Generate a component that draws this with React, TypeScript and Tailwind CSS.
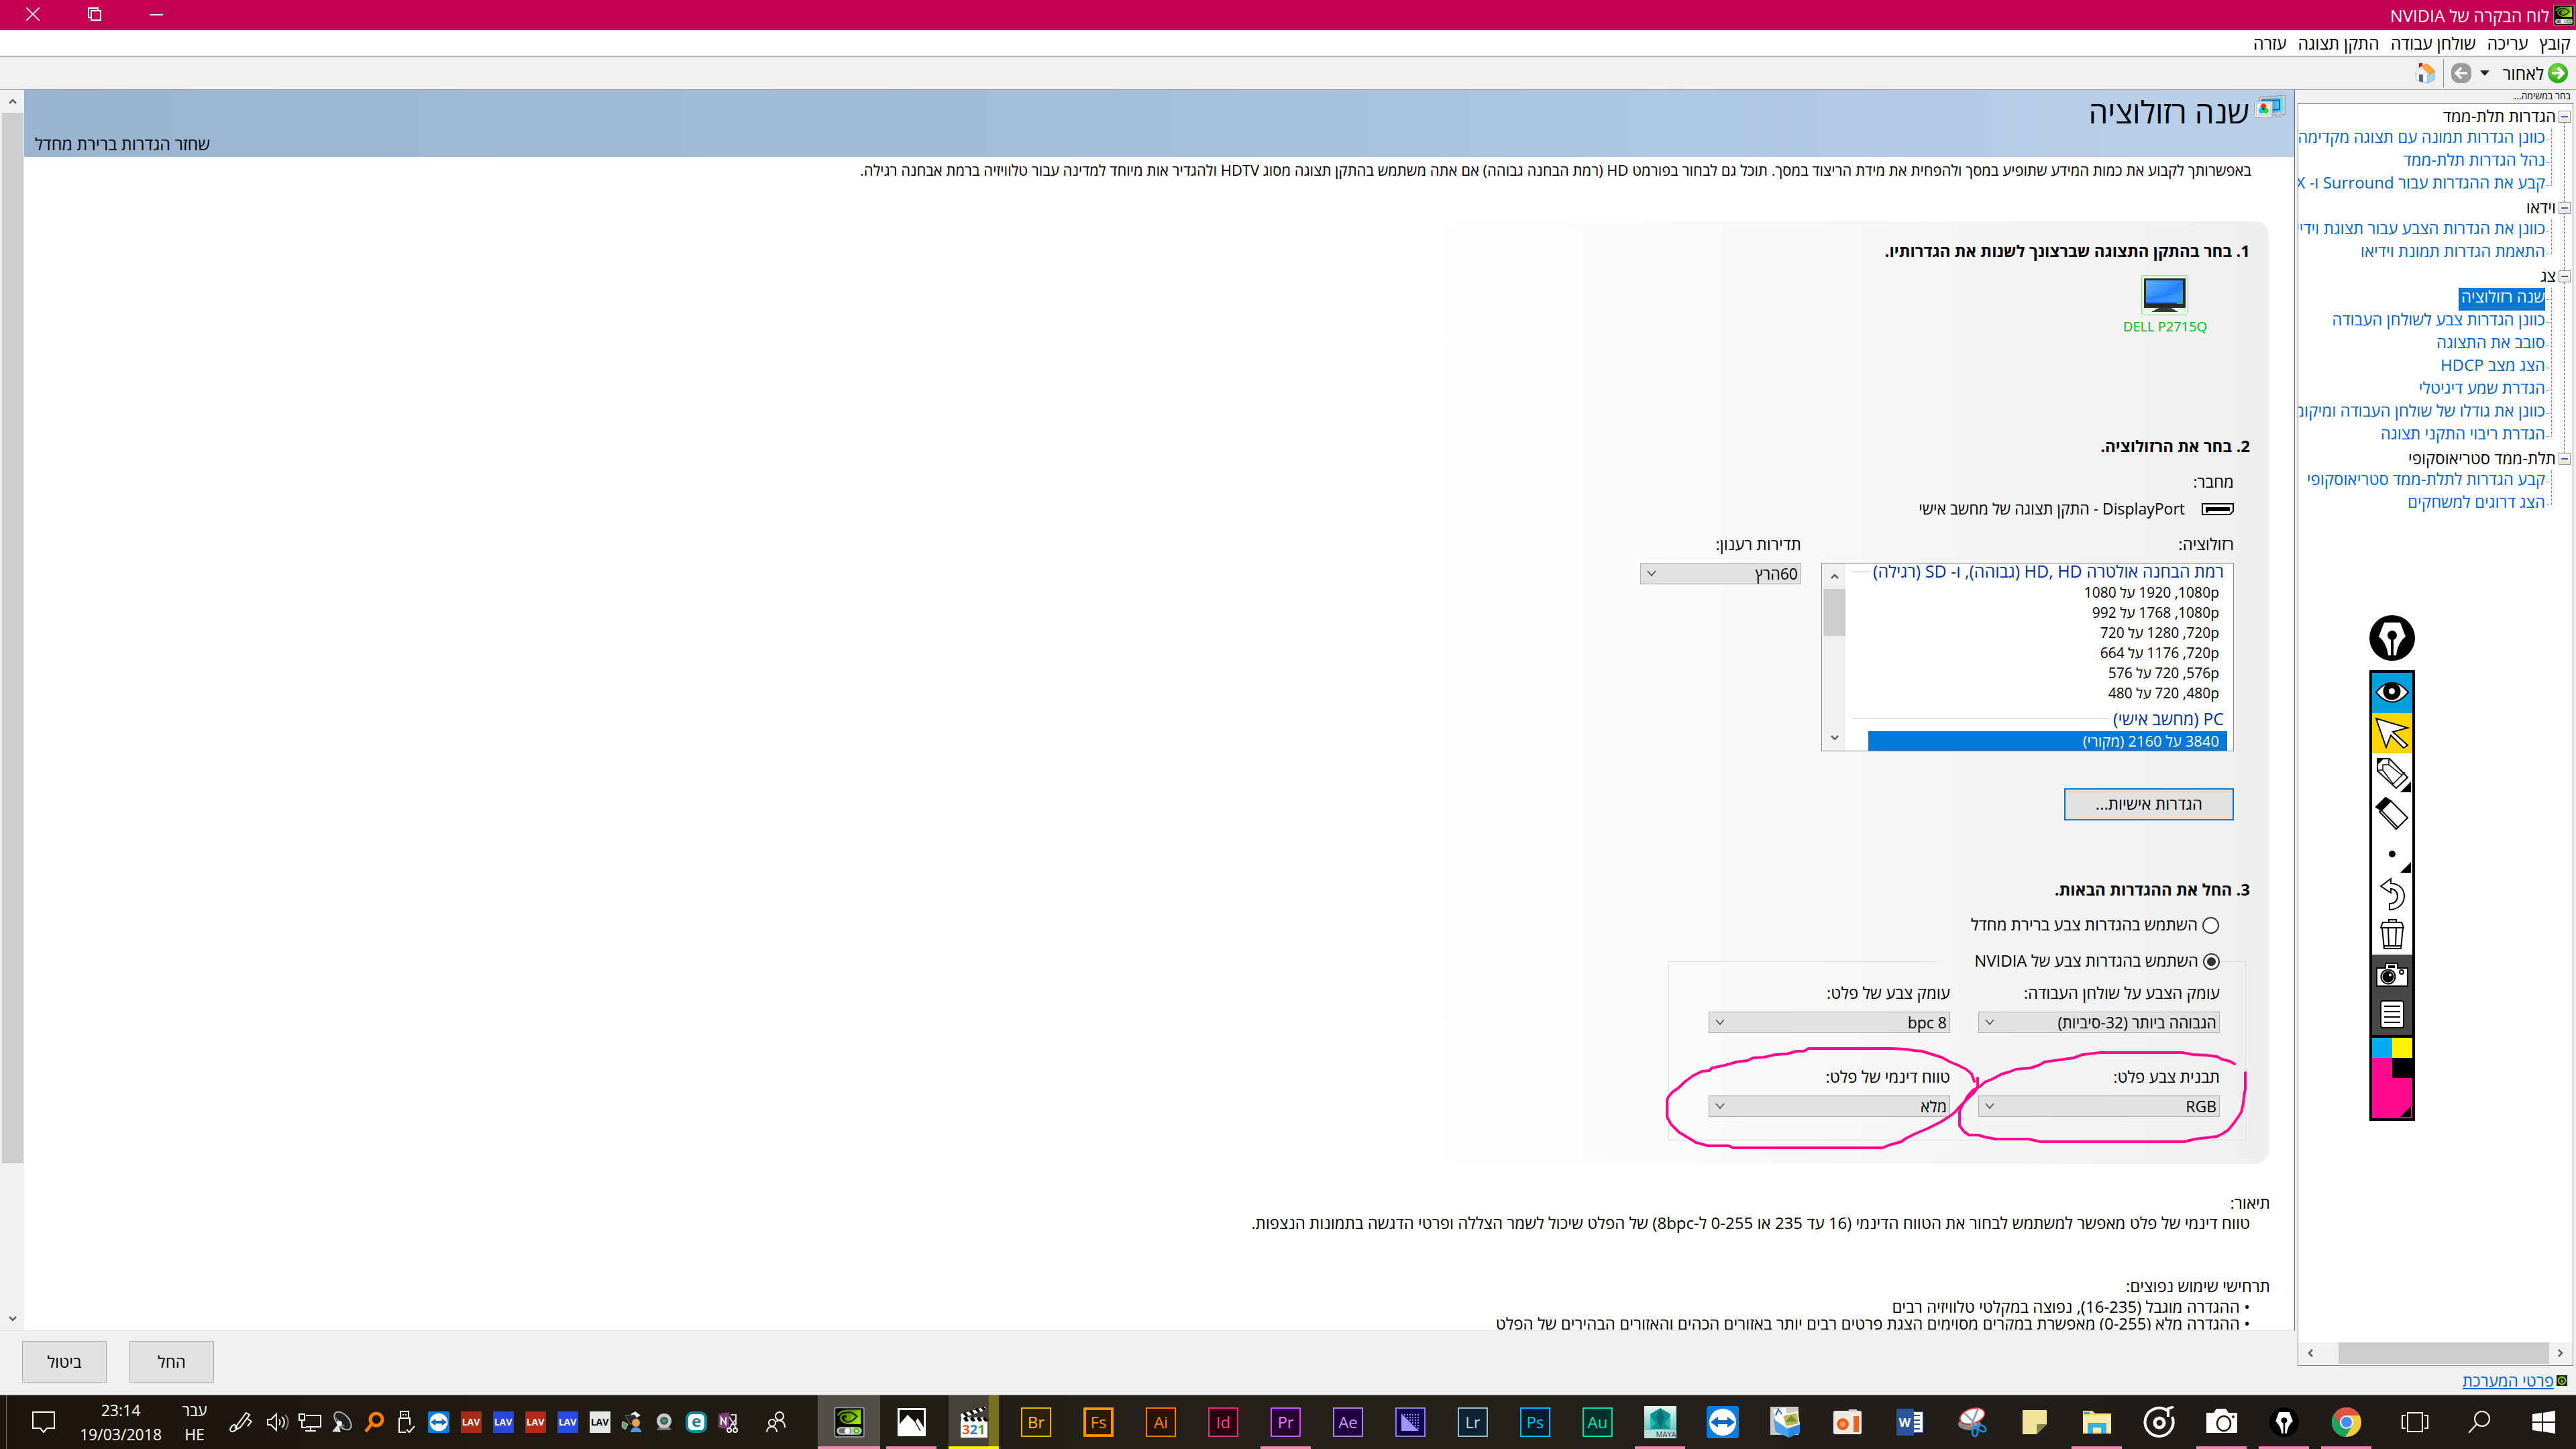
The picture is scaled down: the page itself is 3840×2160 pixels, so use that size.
import type { ReactNode } from 'react';

/* ---------- tree data ---------- */

const TREE = [
  {
    title: 'הגדרות תלת-ממד',
    items: ['כוונן הגדרות תמונה עם תצוגה מקדימה', 'נהל הגדרות תלת-ממד', 'קבע את ההגדרות עבור Surround ו- PhysX'],
  },
  {
    title: 'וידאו',
    items: ['כוונן את הגדרות הצבע עבור תצוגת וידיאו', 'התאמת הגדרות תמונת וידיאו'],
  },
  {
    title: 'צג',
    items: [
      'שנה רזולוציה',
      'כוונן הגדרות צבע לשולחן העבודה',
      'סובב את התצוגה',
      'הצג מצב HDCP',
      'הגדרת שמע דיגיטלי',
      'כוונן את גודלו של שולחן העבודה ומיקומו',
      'הגדרת ריבוי התקני תצוגה',
    ],
  },
  {
    title: 'תלת-ממד סטריאוסקופי',
    items: ['קבע הגדרות לתלת-ממד סטריאוסקופי', 'הצג דרוגים למשחקים'],
  },
];

const SELECTED = 'שנה רזולוציה';

const RESOLUTIONS = [
  '1080p\u200f, 1920 על 1080',
  '1080p\u200f, 1768 על 992',
  '720p\u200f, 1280 על 720',
  '720p\u200f, 1176 על 664',
  '576p\u200f, 720 על 576',
  '480p\u200f, 720 על 480',
];

/* ---------- shared pieces ---------- */

function Chevron({ d }: { d: string }) {
  return (
    <svg width="12" height="12" viewBox="0 0 12 12" fill="none" stroke="#606060" strokeWidth="2.6">
      <path d={d} />
    </svg>
  );
}

const UP = 'M1 9l5-5 5 5';
const DOWN = 'M1 3l5 5 5-5';
const LEFT = 'M9 1L4 6l5 5';
const RIGHT = 'M3 1l5 5-5 5';

function NvidiaIcon({ className }: { className: string }) {
  return (
    <svg className={className} viewBox="0 0 32 32">
      <defs>
        <linearGradient id="nvg" x1="0" y1="0" x2="1" y2="1">
          <stop offset="0" stopColor="#3c6a00" />
          <stop offset="0.5" stopColor="#86c800" />
          <stop offset="1" stopColor="#b6f000" />
        </linearGradient>
      </defs>
      <rect x="0.75" y="0.75" width="30.5" height="30.5" rx="2" fill="#0a0a0a" stroke="#8a8a8a" strokeWidth="1.5" />
      <path d="M13 3h15v15H13z" fill="url(#nvg)" />
      <path d="M4 9c4-6 13-7 19 1-4 6-11 9-15 4-2-3 0-7 5-6 3 0 5 3 3 5s-5 0-4-2" fill="none" stroke="#5f9a00" strokeWidth="1.8" />
      <path d="M13 6c4-1 8 1 11 4-3 4-7 6-11 6" fill="none" stroke="#1d2e00" strokeWidth="1.6" />
      <rect x="3" y="21" width="26" height="8" rx="4" fill="#c9c9c9" />
      <rect x="5" y="22.5" width="13" height="5" rx="2.5" fill="#6c6c6c" />
      <circle cx="14" cy="25" r="3" fill="#f4f4f4" />
      <circle cx="23.5" cy="25" r="3.2" fill="#3fc11c" />
      <circle cx="23.5" cy="25" r="1.4" fill="#d7ffd0" />
    </svg>
  );
}

function Combo({ id, value, width }: { id: string; value: string; width: string }) {
  return (
    <div className={`relative h-8 ${width}`}>
      <select
        id={id}
        defaultValue={value}
        className="block h-8 w-full appearance-none border border-[#adadad] bg-[#e1e1e1] pr-1 pl-8 text-[23px] leading-[30px] text-black"
      >
        <option>{value}</option>
      </select>
      <svg className="pointer-events-none absolute top-2.5 left-2.5 h-3 w-3.5" viewBox="0 0 14 12" fill="none" stroke="#444" strokeWidth="1.5">
        <path d="M1 2l6 7 6-7" />
      </svg>
    </div>
  );
}

/* ---------- window chrome ---------- */

function TitleBar() {
  const btn = 'flex h-[45px] w-[92px] items-center justify-center';
  return (
    <header className="flex h-[45px] shrink-0 items-center bg-[#c40052] pr-[2px] pl-[3px] text-white">
      <NvidiaIcon className="h-8 w-8" />
      <h1 className="mr-1.5 text-[25px] leading-[34px]">לוח הבקרה של NVIDIA</h1>
      <div className="mr-auto flex pb-1">
        <button className={btn} aria-label="מזער">
          <svg width="20" height="20" viewBox="0 0 20 20" stroke="white" strokeWidth="2"><path d="M0 11h20" /></svg>
        </button>
        <button className={btn} aria-label="שחזר">
          <svg width="20" height="20" viewBox="0 0 20 20" fill="none" stroke="white" strokeWidth="2"><path d="M5 5h14v14H5zM5 15H1V1h14v4" /></svg>
        </button>
        <button className={btn} aria-label="סגור">
          <svg width="20" height="20" viewBox="0 0 20 20" stroke="white" strokeWidth="1.6"><path d="M0 0l20 20M20 0L0 20" /></svg>
        </button>
      </div>
    </header>
  );
}

function MenuBar() {
  return (
    <nav className="flex h-[39px] shrink-0 items-center gap-[17px] border-b-2 border-[#f0f0f0] bg-white pr-2 text-[25px] leading-[36px] text-black">
      <button>קובץ</button>
      <button>עריכה</button>
      <button>שולחן עבודה</button>
      <button>התקן תצוגה</button>
      <button>עזרה</button>
    </nav>
  );
}

function ToolBar() {
  return (
    <div className="flex h-[50px] shrink-0 items-center border-t border-b border-[#a0a0a0] bg-[#f0f0f0] pr-3">
      <button className="flex items-center gap-1.5 text-[25px] leading-[34px]">
        <svg width="30" height="30" viewBox="0 0 30 30">
          <defs>
            <radialGradient id="back" cx="0.4" cy="0.3" r="0.8">
              <stop offset="0" stopColor="#7fe04a" />
              <stop offset="1" stopColor="#159a08" />
            </radialGradient>
          </defs>
          <circle cx="15" cy="15" r="15" fill="url(#back)" />
          <path d="M6 15h16M15 7l8 8-8 8" fill="none" stroke="white" strokeWidth="4" />
        </svg>
        לאחור
      </button>
      <svg className="mr-5" width="14" height="8" viewBox="0 0 14 8"><path d="M0 0h14L7 8z" fill="#222" /></svg>
      <button className="mr-[13px]" aria-label="קדימה">
        <svg width="30" height="30" viewBox="0 0 30 30">
          <rect width="30" height="30" rx="12" fill="#9b9b9b" />
          <path d="M24 15H8M15 7l-8 8 8 8" fill="none" stroke="white" strokeWidth="3.5" />
        </svg>
      </button>
      <div className="mr-[11px] h-[42px] w-px bg-[#8a8a8a]" />
      <button className="mr-[11px]" aria-label="דף הבית">
        <svg width="32" height="32" viewBox="0 0 32 32">
          <rect x="7" y="1" width="5" height="8" fill="#b3201a" />
          <path d="M2 15L11 7l9 10v14L3 27z" fill="#f7faff" stroke="#8eb4dc" />
          <path d="M20 17l10-3v12l-10 5z" fill="#a9d3f5" stroke="#7fa9d8" />
          <path d="M10 6l9-4 12 11-9 6z" fill="#fba93e" stroke="#e08a2a" />
          <path d="M10 6L1 15l2 2 8-8 9 10 2-1z" fill="white" stroke="#9bb8d8" strokeWidth="0.7" />
          <path d="M7 18h6v12l-6-2z" fill="#56629a" />
        </svg>
      </button>
    </div>
  );
}

/* ---------- side tree ---------- */

function Sidebar() {
  return (
    <aside className="flex w-[419px] shrink-0 flex-col bg-[#f0f0f0] pr-1 pl-1">
      <p className="h-5 pr-1 text-[14px] leading-[18px] text-black">בחר במשימה...</p>
      <div className="flex min-h-0 flex-1 flex-col border border-[#828790] bg-white">
        <ul className="min-h-0 flex-1 overflow-hidden pt-0.5">
          {TREE.map((group, gi) => (
            <li key={group.title} className="relative">
              {gi < TREE.length - 1 && (
                <span className="absolute top-[26px] right-[12px] -bottom-2 border-r border-dotted border-[#555]" />
              )}
              <div className="flex h-[34px] items-center gap-1 pr-[3px]">
                <button
                  aria-label={group.title}
                  className="flex h-[18px] w-[18px] items-center justify-center border border-[#919191] bg-linear-to-b from-white to-[#e4e4e4]"
                >
                  <span className="h-0.5 w-2.5 bg-[#3f5ea8]" />
                </button>
                <span className="pb-0.5 text-[24px] leading-[30px] whitespace-nowrap">{group.title}</span>
              </div>
              <ul className="relative mr-[31px]">
                <span className="absolute top-0 right-0 bottom-4 border-r border-dotted border-[#777]" />
                {group.items.map((item) => (
                  <li key={item} className="flex h-[34px]">
                    <span className="mt-[17px] ml-0.5 w-2 shrink-0 border-t border-dotted border-[#777]" />
                    <a
                      href="#"
                      className={
                        item === SELECTED
                          ? 'h-[34px] bg-[#0078d7] pl-1 text-[24px] leading-[25px] whitespace-nowrap text-white'
                          : 'h-[34px] text-[24px] leading-[25px] whitespace-nowrap text-[#0066cc]'
                      }
                    >
                      {item}
                    </a>
                  </li>
                ))}
              </ul>
            </li>
          ))}
        </ul>
        <div className="flex h-[34px] shrink-0 border-b-2 border-white bg-[#f0f0f0] px-px">
          <span className="flex w-[34px] items-center justify-center"><Chevron d={RIGHT} /></span>
          <span className="w-[314px] bg-[#cdcdcd]" />
          <span className="mr-auto flex w-[34px] items-center justify-center"><Chevron d={LEFT} /></span>
        </div>
      </div>
      <div className="flex h-[43px] shrink-0 items-center gap-1 pr-[9px]">
        <svg width="16" height="16" viewBox="0 0 16 16">
          <rect width="16" height="16" fill="#16240a" />
          <circle cx="8" cy="8" r="5.4" fill="none" stroke="#a5e000" strokeWidth="1.8" />
          <path d="M8 7v4M8 4.4v1.4" stroke="#a5e000" strokeWidth="2" />
        </svg>
        <a href="#" className="text-[24px] leading-[30px] text-[#0066cc] underline">פרטי המערכת</a>
      </div>
    </aside>
  );
}

/* ---------- main page ---------- */

function PageHeader() {
  return (
    <div className="flex h-[100px] shrink-0 bg-linear-to-l from-[#b9d0ea] via-[#a5bfdb] to-[#99b3d1] pr-3 pl-4">
      <svg className="mt-2 h-[38px] w-12 shrink-0" viewBox="0 0 48 38">
        <defs>
          <linearGradient id="scr" x1="0" y1="0" x2="1" y2="0">
            <stop offset="0" stopColor="#1d66c8" />
            <stop offset="1" stopColor="#5ce6f5" />
          </linearGradient>
        </defs>
        <path d="M8 3l39-3v29l-39 1z" fill="#c9ccd2" stroke="#8c9098" />
        <path d="M11 6l32-3v22l-32 2z" fill="url(#scr)" />
        <path d="M17 9l21-2v14l-21 2z" fill="none" stroke="#1a5cb5" strokeWidth="2" />
        <path d="M33 29h6l3 5H29z" fill="#b9bcc2" />
        <path d="M1 9h27l-1 24H0z" fill="#e8eaee" stroke="#9a9ea6" />
        <path d="M4 12h21v17H3z" fill="#f6f8fa" stroke="#8cbbe8" />
        <circle cx="14" cy="17" r="4.4" fill="#ff2a1a" />
        <circle cx="11" cy="23" r="4.4" fill="#12c8f0" />
        <circle cx="17.5" cy="23" r="4.4" fill="#1fe01f" />
        <circle cx="14" cy="20.5" r="1.8" fill="#3b1a80" />
        <path d="M10 33h9l4 4H7z" fill="#c5c8ce" />
      </svg>
      <h2 className="mr-[7px] text-[46px] leading-[64px]">שנה רזולוציה</h2>
      <button className="mr-auto self-end text-[25px] leading-[40px]">שחזר הגדרות ברירת מחדל</button>
    </div>
  );
}

function StepTitle({ children }: { children: ReactNode }) {
  return <h3 className="h-[34px] text-[24px] leading-[32px] font-bold">{children}</h3>;
}

function ScrollBar() {
  return (
    <div className="flex w-[36px] shrink-0 flex-col border-l-[3px] border-[#f0f0f0] bg-[#f0f0f0] pr-px">
      <span className="flex h-[34px] items-center justify-center"><Chevron d={UP} /></span>
      <span className="basis-[1566px] bg-[#cdcdcd]" />
      <span className="mt-auto flex h-[34px] items-center justify-center"><Chevron d={DOWN} /></span>
    </div>
  );
}

function ListHeader({ children }: { children: ReactNode }) {
  return (
    <div className="flex items-center gap-1 pr-3.5">
      <span className="text-[25px] leading-[30px] whitespace-nowrap text-[#003399]">{children}</span>
      <span className="h-px flex-1 bg-[#c9d6ea]" />
    </div>
  );
}

function ResolutionList() {
  return (
    <div className="flex h-[281px] w-[615px] overflow-hidden border border-[#828790] bg-white pl-0.5">
      <div className="flex-1 pl-2.5">
        <div className="-mt-1">
          <ListHeader>רמת הבחנה אולטרה HD, HD (גבוהה), ו- SD (רגילה)</ListHeader>
        </div>
        <ul className="mt-0.5" aria-labelledby="res-label">
          {RESOLUTIONS.map((r) => (
            <li key={r} className="h-[30px] pr-[21px] text-[21px] leading-[30px]">{r}</li>
          ))}
        </ul>
        <div className="mt-2">
          <ListHeader>PC (מחשב אישי)</ListHeader>
        </div>
        <p className="mt-1 mr-[9px] ml-6 h-[29px] bg-[#0078d7] pr-3 text-[22px] leading-[28px] text-white">3840 על 2160 (מקורי)</p>
      </div>
      <div className="flex w-[33px] flex-col bg-[#f0f0f0]">
        <span className="flex h-[38px] items-center justify-center"><Chevron d={UP} /></span>
        <span className="h-[70px] bg-[#cdcdcd]" />
        <span className="mt-auto flex h-[38px] items-center justify-center"><Chevron d={DOWN} /></span>
      </div>
    </div>
  );
}

function Field({ id, label, value }: { id: string; label: string; value: string }) {
  return (
    <div className="w-[360px]">
      <label htmlFor={id} className="block h-[34px] text-[24px] leading-[32px] whitespace-nowrap">{label}</label>
      <div className="mt-2.5"><Combo id={id} value={value} width="w-full" /></div>
    </div>
  );
}

function Radio({ id, label, checked }: { id: string; label: string; checked?: boolean }) {
  return (
    <div className="flex h-[34px] items-center gap-[7px]">
      <input
        id={id}
        type="radio"
        name="color"
        defaultChecked={checked}
        className="h-[25px] w-[25px] shrink-0 appearance-none rounded-full border-2 border-[#333] bg-white checked:bg-[radial-gradient(circle,#333_0_6px,white_7px)]"
      />
      <label htmlFor={id} className="pb-0.5 text-[24px] leading-[32px] whitespace-nowrap">{label}</label>
    </div>
  );
}

function InkCircles() {
  return (
    <svg
      className="pointer-events-none absolute top-[103px] -right-3 h-[170px] w-[880px]"
      viewBox="2480 1553 880 170"
      fill="none"
      stroke="#ff0a8c"
      strokeWidth="4"
      strokeLinejoin="round"
      strokeLinecap="round"
    >
      <path d="M2944 1612L2940 1601 2932 1594 2920 1588 2908 1583 2895 1576 2882 1572 2866 1567 2855 1566 2841 1564 2820 1563H2697L2690 1567 2679 1567 2665 1571 2648 1572 2630 1576 2614 1577 2606 1581 2590 1583 2572 1588 2553 1592 2549 1596 2538 1597 2524 1604 2512 1613 2504 1621 2494 1628 2488 1635 2486 1640V1665L2492 1676 2504 1688 2516 1695 2529 1703 2547 1708H2578L2584 1711H2807L2817 1707 2835 1702 2842 1697 2856 1690 2875 1682 2893 1673 2906 1665 2915 1658 2922 1650 2930 1642 2937 1635 2945 1627 2949 1620V1607" />
      <path d="M3332 1586L3325 1582 3313 1579 3306 1575 3290 1573 3270 1572 3254 1569H3132L3106 1572 3092 1577 3070 1580 3049 1583 3040 1588 3028 1592 3006 1594 2996 1598 2985 1601 2972 1608 2960 1613 2952 1620 2942 1625 2934 1634 2932 1638 2926 1648 2922 1657V1678L2929 1687 2936 1692H2950L2960 1695 2976 1698H3025L3043 1702H3257L3273 1698 3290 1696 3306 1694 3314 1690 3322 1685 3328 1678 3334 1670 3342 1658 3345 1645 3346 1634 3348 1623V1599" />
    </svg>
  );
}

function Panel() {
  return (
    <section className="mt-14 mr-[38px] rounded-[20px] bg-linear-to-l from-[#efefef] to-white to-38% pt-7 pr-7 pb-[35px]">
      <StepTitle>1. בחר בהתקן התצוגה שברצונך לשנות את הגדרותיו.</StepTitle>
      <div className="mt-[18px] flex h-[94px] pr-16">
        <button className="flex flex-col items-center">
          <svg className="h-[60px] w-[70px]" viewBox="0 0 70 60">
            <defs>
              <linearGradient id="mon" x1="0" y1="0" x2="1" y2="1">
                <stop offset="0" stopColor="#5db4ff" />
                <stop offset="0.5" stopColor="#2f8cff" />
                <stop offset="1" stopColor="#3aa5ff" />
              </linearGradient>
            </defs>
            <rect x="0.5" y="0.5" width="69" height="59" rx="2" fill="#e6fbe6" stroke="#86d586" />
            <path d="M4 5h62v44H4z" fill="#2b2b2b" />
            <path d="M7 8h55v34H7z" fill="url(#mon)" />
            <path d="M7 34c22-3 40-10 50-26h5v14C46 32 26 36 7 36z" fill="#1f72f0" opacity="0.45" />
            <path d="M7 41h46v2H7z" fill="#1231c8" />
            <path d="M53 41h9v2h-9z" fill="#37b52a" />
            <path d="M26 49h18l11 6H15z" fill="#3a3a3a" />
          </svg>
          <span className="text-[20px] leading-[34px] text-[#0fb40f]">DELL P2715Q</span>
        </button>
      </div>

      <div className="mt-[145px]"><StepTitle>2. בחר את הרזולוציה.</StepTitle></div>
      <div className="mt-[19px] pr-6">
        <p className="h-[34px] text-[24px] leading-[32px]">מחבר:</p>
        <div className="mt-1.5 flex h-[34px] items-center gap-[25px]">
          <svg width="48" height="18" viewBox="0 0 48 18">
            <path d="M1 1h46v11l-5 5H1z" fill="white" stroke="black" strokeWidth="2" />
            <path d="M6 6h36v6H10v2H6z" fill="black" />
          </svg>
          <span className="pb-0.5 text-[23px] leading-[32px]">DisplayPort - התקן תצוגה של מחשב אישי</span>
        </div>
        <div className="mt-[19px] flex gap-[30px]">
          <div>
            <p id="res-label" className="h-[34px] text-[24px] leading-[32px]">רזולוציה:</p>
            <div className="mt-2.5"><ResolutionList /></div>
          </div>
          <div>
            <label htmlFor="refresh" className="block h-[34px] text-[24px] leading-[32px]">תדירות רענון:</label>
            <div className="mt-2.5"><Combo id="refresh" value="60הרץ" width="w-[240px]" /></div>
          </div>
        </div>
        <button className="mt-[55px] block h-12 w-[253px] border-2 border-[#0078d7] bg-[#e1e1e1] pb-0.5 text-[24px] leading-[32px]">
          הגדרות אישיות...
        </button>
      </div>

      <div className="mt-[87px]"><StepTitle>3. החל את ההגדרות הבאות.</StepTitle></div>
      <div className="mt-[18px] pr-[46px]">
        <Radio id="color-default" label="השתמש בהגדרות צבע ברירת מחדל" />
      </div>
      <fieldset className="relative mt-5 mr-1.5 w-[861px] border border-[#dcdcdc] pr-[38px] pb-[34px]">
        <legend className="w-[420px]">
          <Radio id="color-nvidia" label="השתמש בהגדרות צבע של NVIDIA" checked />
        </legend>
        <div className="mt-3.5 flex gap-[42px]">
          <Field id="desktop-depth" label="עומק הצבע על שולחן העבודה:" value="הגבוהה ביותר (32-סיביות)" />
          <Field id="output-depth" label="עומק צבע של פלט:" value="8 bpc" />
        </div>
        <div className="mt-[49px] flex gap-[42px]">
          <Field id="output-format" label="תבנית צבע פלט:" value="RGB" />
          <Field id="output-range" label="טווח דינמי של פלט:" value="מלא" />
        </div>
        <InkCircles />
      </fieldset>
    </section>
  );
}

function Main() {
  return (
    <main className="flex min-w-0 flex-1 flex-col bg-[#f0f0f0]">
      <div className="flex min-h-0 flex-1 border-r border-b border-[#696969] border-b-[#e3e3e3] bg-white">
        <div className="min-w-0 flex-1 overflow-hidden">
          <PageHeader />
          <p className="h-10 pr-16 text-[22px] leading-[38px] whitespace-nowrap">
            באפשרותך לקבוע את כמות המידע שתופיע במסך ולהפחית את מידת הריצוד במסך. תוכל גם לבחור בפורמט HD (רמת הבחנה גבוהה) אם אתה משתמש בהתקן תצוגה מסוג HDTV ולהגדיר אות מיוחד למדינה עבור טלוויזיה ברמת אבחנה רגילה.
          </p>
          <Panel />
          <div className="mt-[43px] pr-9 text-[24px] leading-[30px]">
            <h4>תיאור:</h4>
            <p className="pr-[30px]">
              טווח דינמי של פלט מאפשר למשתמש לבחור את הטווח הדינמי (16 עד 235 או 0-255 ל-8bpc) של הפלט שיכול לשמר הצללה ופרטי הדגשה בתמונות הנצפות.
            </p>
            <h4 className="mt-16">תרחישי שימוש נפוצים:</h4>
            <ul className="mt-[3px] pr-[30px] leading-[25px]">
              <li>• ההגדרה מוגבל (16-235), נפוצה במקלטי טלוויזיה רבים</li>
              <li>• ההגדרה מלא (0-255) מאפשרת במקרים מסוימים הצגת פרטים רבים יותר באזורים הכהים והאזורים הבהירים של הפלט</li>
            </ul>
          </div>
        </div>
        <ScrollBar />
      </div>
      <footer className="flex h-[95px] shrink-0 justify-end gap-[34px] pt-[15px] pl-[33px]">
        <button className="h-[62px] w-[126px] border border-[#adadad] bg-[#e1e1e1] text-[24px]">החל</button>
        <button className="h-[62px] w-[126px] border border-[#adadad] bg-[#e1e1e1] text-[24px]">ביטול</button>
      </footer>
    </main>
  );
}

/* ---------- floating drawing toolbar ---------- */

const CORNER = <path d="M42 58h16V42z" fill="black" stroke="none" />;

const PEN_TOOLS: { name: string; bg: string; art: ReactNode }[] = [
  {
    name: 'הצג',
    bg: 'bg-[#00a0dc]',
    art: (
      <>
        <path d="M6 29Q30 0 54 29Q30 58 6 29z" />
        <circle cx="29.5" cy="27.5" r="12" fill="black" />
        <circle cx="29.5" cy="27.5" r="4.5" fill="white" stroke="none" />
      </>
    ),
  },
  { name: 'בחר', bg: 'bg-[#ffd400]', art: <path d="M6 8l47 14-22 6 22 20-6 4-19-19-7 18z" /> },
  {
    name: 'עיפרון',
    bg: 'bg-white',
    art: (
      <>
        <path d="M8 8h18l27 28-17 16L8 26z" />
        <path d="M8 25h8v-8h9V8M25 17l20 16M16 25l15 20M32 45l16-16M30 47l19-19" strokeWidth="1.5" />
        <path d="M8 8h8l-8 8z" fill="black" />
        {CORNER}
      </>
    ),
  },
  {
    name: 'מחק',
    bg: 'bg-white',
    art: (
      <>
        <path d="M28 11l25 25-17 17-25-26z" />
        <path d="M14 25l24 25" />
        <path d="M6 20L20 6l8 5-14 14z" fill="black" />
      </>
    ),
  },
  {
    name: 'עובי',
    bg: 'bg-white',
    art: (
      <>
        <circle cx="30" cy="30" r="5" fill="black" stroke="none" />
        {CORNER}
      </>
    ),
  },
  { name: 'בטל', bg: 'bg-white', art: <path d="M13 18L28 7v7c12 0 20 8 20 19S39 53 26 53v-9c8 0 12-5 12-11s-4-11-10-11v6z" /> },
  {
    name: 'נקה',
    bg: 'bg-white',
    art: <path d="M25 12V8h11v4M15 20l3 31h25l3-31M16 12h28l3 8H13zM18 47h25M24 21l1 26M36 21l-1 26" />,
  },
  {
    name: 'צלם',
    bg: 'bg-[#474747]',
    art: (
      <>
        <path d="M7 20h13v-7h18v7h15v27H7z" />
        <path d="M24 16h10v4H24z" fill="black" stroke="none" />
        <circle cx="24" cy="33" r="10.5" />
        <circle cx="24" cy="33" r="7.5" fill="black" />
        <circle cx="27" cy="30.5" r="2" fill="white" stroke="none" />
        <circle cx="44" cy="26" r="3" />
      </>
    ),
  },
  {
    name: 'רשימה',
    bg: 'bg-[#474747]',
    art: (
      <>
        <rect x="13" y="9" width="34" height="40" rx="3" />
        <path d="M18 17h24M18 25h24M18 33h24M18 41h24" />
      </>
    ),
  },
];

function Nib({ className }: { className: string }) {
  return (
    <svg className={className} viewBox="0 0 68 68">
      <circle cx="34" cy="34" r="34" fill="black" />
      <path d="M22 11h24l8 21c-8 6-13 17-14 28H28c-1-11-6-22-14-28z" fill="white" />
      <circle cx="34" cy="30" r="7" fill="black" />
      <path d="M34 30v30" stroke="black" strokeWidth="4" />
    </svg>
  );
}

function PenToolbar() {
  return (
    <div className="absolute top-[917px] right-[240px] w-[68px]">
      <button aria-label="עט" className="block"><Nib className="h-[68px] w-[68px]" /></button>
      <div className="mt-3.5 border-4 border-black bg-black">
        {PEN_TOOLS.map((t) => (
          <button key={t.name} aria-label={t.name} className={`block h-[60px] w-[60px] ${t.bg}`}>
            <svg className="h-[60px] w-[60px]" viewBox="0 0 60 60" fill="white" stroke="black" strokeWidth="2">{t.art}</svg>
          </button>
        ))}
        <div className="mt-1 grid h-[120px] grid-cols-2 grid-rows-[30px_30px_60px] bg-[#ff0a8c]">
          <span className="bg-[#fff200]" />
          <span className="bg-[#00aeef]" />
          <span className="bg-black" />
          <span />
          <svg className="h-[60px] w-[60px]" viewBox="0 0 60 60"><path d="M42 58h16V42z" /></svg>
        </div>
      </div>
    </div>
  );
}

/* ---------- taskbar ---------- */

function Adobe({ text, box }: { text: string; box: string }) {
  return <span className={`flex h-[44px] w-[45px] items-center justify-center text-[24px] leading-[36px] ${box}`}>{text}</span>;
}

function TeamViewer({ className }: { className: string }) {
  return (
    <svg className={className} viewBox="0 0 48 48">
      <rect width="48" height="48" rx="4" fill="#0a7de0" />
      <circle cx="24" cy="24" r="20" fill="white" />
      <path d="M6 24l11-8v5h14v-5l11 8-11 8v-5H17v5z" fill="#0a66c2" />
    </svg>
  );
}

const big = 'h-12 w-12';

const APPS: { name: string; line?: string; bg?: string; art: ReactNode }[] = [
  {
    name: 'Chrome',
    line: 'bg-[#ff80b4]',
    art: (
      <svg className="h-11 w-11" viewBox="0 0 48 48">
        <circle cx="24" cy="24" r="24" fill="#f7cb3f" />
        <path d="M24 24L3.2 12A24 24 0 0 0 22 48l12-19z" fill="#1da362" />
        <path d="M24 24V13h21.3A24 24 0 0 0 3.2 12l11 17z" fill="#de5246" />
        <circle cx="24" cy="24" r="11" fill="white" />
        <circle cx="24" cy="24" r="8.8" fill="#4a8af4" />
      </svg>
    ),
  },
  { name: 'Epic Pen', line: 'bg-[#ff80b4]', art: <Nib className="h-11 w-11" /> },
  {
    name: 'Camera',
    line: 'bg-[#ff80b4]',
    art: (
      <svg className={big} viewBox="0 0 48 48">
        <path d="M1 10h11l4-6h14l4 6h13v30H1z" fill="white" />
        <ellipse cx="27" cy="26" rx="10" ry="11" fill="none" stroke="#1c1712" strokeWidth="2.5" />
        <circle cx="41" cy="16" r="2" fill="#1c1712" />
      </svg>
    ),
  },
  {
    name: 'Groove',
    art: (
      <svg className={big} viewBox="0 0 48 48" fill="none" stroke="white" strokeWidth="4">
        <path d="M36 7A21 21 0 1 0 43 16M37 16V4l8-3" />
        <circle cx="24" cy="25" r="7" strokeWidth="5" />
      </svg>
    ),
  },
  {
    name: 'Explorer',
    line: 'bg-[#ff80b4]',
    art: (
      <svg className={big} viewBox="0 0 48 48">
        <path d="M3 7h14l4 4h24v30H3z" fill="#ffd766" />
        <path d="M3 13h42v26H3z" fill="#ffe9a6" />
        <path d="M5 9h8v3H5z" fill="#2d9be0" />
        <path d="M10 41V25h28v16h-8v-9H18v9z" fill="#35b1ea" />
      </svg>
    ),
  },
  {
    name: 'Sticky Notes',
    art: <svg className={big} viewBox="0 0 48 48"><path d="M6 6h36v21L27 42H6z" fill="#f2e49b" /><path d="M42 27H27v15z" fill="#8e824d" /></svg>,
  },
  {
    name: 'Snipping Tool',
    art: (
      <svg className={big} viewBox="0 0 48 48">
        <ellipse cx="20" cy="27" rx="17" ry="9" fill="#8a8a8a" />
        <ellipse cx="24" cy="15" rx="19" ry="11" fill="white" stroke="#d03434" strokeWidth="2" transform="rotate(-18 24 15)" />
        <path d="M12 10l20 20M33 3L22 30" stroke="#9aa0a8" strokeWidth="3" />
        <ellipse cx="38" cy="33" rx="7" ry="4" fill="none" stroke="#1e88d8" strokeWidth="3" transform="rotate(30 38 33)" />
        <ellipse cx="28" cy="38" rx="4" ry="7" fill="none" stroke="#1e88d8" strokeWidth="3" />
      </svg>
    ),
  },
  {
    name: 'Word',
    art: (
      <span className="relative flex h-11 w-10 items-center justify-end">
        <span className="flex h-8 w-6 flex-col justify-evenly border border-[#2a5699] bg-white px-1">
          <i className="h-0.5 bg-[#2a5699]" /><i className="h-0.5 bg-[#2a5699]" /><i className="h-0.5 bg-[#2a5699]" /><i className="h-0.5 bg-[#2a5699]" />
        </span>
        <span className="absolute top-0.5 left-0 h-10 w-[26px] bg-[#2a5699] text-center text-[18px] leading-10 font-bold text-white">W</span>
      </span>
    ),
  },
  {
    name: 'Recorder',
    art: (
      <svg className={big} viewBox="0 0 48 48">
        <rect x="3" y="7" width="42" height="35" rx="3" fill="#eee9e4" />
        <path d="M26 5h12v4H26z" fill="#d8d2cc" />
        <circle cx="17" cy="27" r="9" fill="#e8641e" />
        <circle cx="17" cy="27" r="4" fill="#ff9c5a" />
        <path d="M33 15h8v24h-8z" fill="#e8641e" />
      </svg>
    ),
  },
  {
    name: 'Files',
    art: (
      <svg className={big} viewBox="0 0 48 48">
        <path d="M2 1h42v42H2z" fill="#c9c9c9" />
        <path d="M6 6l18-4 8 26-18 6z" fill="white" />
        <path d="M10 14l4-9 5 7" fill="none" stroke="#1c62c8" strokeWidth="2" />
        <path d="M20 14l22-5 3 18-20 4z" fill="#c9b04a" stroke="white" strokeWidth="2" />
        <path d="M24 24l9-10 9 9z" fill="#5b9a3a" />
        <path d="M7 20l21 14 18-7v13L30 47 10 38z" fill="#2b87dc" />
        <path d="M7 20l21 14 2 13-20-9z" fill="#49a3f0" />
      </svg>
    ),
  },
  { name: 'TeamViewer', art: <TeamViewer className={big} /> },
  {
    name: 'Maya',
    line: 'bg-[#ff80b4]',
    art: (
      <span className="flex h-12 w-12 flex-col items-center bg-linear-to-b from-[#e5f5f2] to-[#2fb5ae]">
        <svg className="h-9 w-9" viewBox="0 0 36 36"><path d="M18 3l15 9v22H3V12z" fill="#0b8f8f" /><path d="M18 3l6 14-6 17-6-17z" fill="#0a6c70" /><path d="M3 34V14l8 12zM33 34V14l-8 12z" fill="#25b9b4" /></svg>
        <span className="w-full bg-[#b8dedb] text-right text-[11px] leading-3 text-[#333]">MAYA</span>
      </span>
    ),
  },
  { name: 'Audition', art: <Adobe text="Au" box="border-2 border-[#00e0a8] bg-[#00312a] text-[#00e5ad]" /> },
  { name: 'Photoshop', art: <Adobe text="Ps" box="border-2 border-[#00b8f5] bg-[#001d2a] text-[#00c3ff]" /> },
  { name: 'Lightroom', art: <Adobe text="Lr" box="border-2 border-[#9bbfd6] bg-[#0e2230] text-[#b4dcf5]" /> },
  {
    name: 'Media Encoder',
    art: (
      <span className="flex h-[44px] w-[45px] items-center justify-center border-2 border-[#8a80e8] bg-[#12004e]">
        <svg width="28" height="26" viewBox="0 0 28 26">
          <path d="M0 0l26 26H0z" fill="#9d94ff" />
          <path d="M4 2h22M8 6h20M12 10h16M16 14h12M20 18h8M24 22h4" stroke="#9d94ff" strokeWidth="2" strokeDasharray="2 2" />
        </svg>
      </span>
    ),
  },
  { name: 'After Effects', art: <Adobe text="Ae" box="border-2 border-[#b57af0] bg-[#1f003f] text-[#cf96ff]" /> },
  { name: 'Premiere', line: 'bg-[#ff80b4]', art: <Adobe text="Pr" box="border-2 border-[#cc55f0] bg-[#2a0033] text-[#e77aff]" /> },
  { name: 'InDesign', art: <Adobe text="Id" box="border-2 border-[#d9327c] bg-[#2a0010] text-[#ff3d8e]" /> },
  { name: 'Illustrator', art: <Adobe text="Ai" box="border-2 border-[#f07a00] bg-[#271300] text-[#ff8200]" /> },
  { name: 'Fuse', art: <Adobe text="Fs" box="border-4 border-[#ff9400] bg-[#2b1800] text-[#ff9a0e]" /> },
  { name: 'Bridge', art: <Adobe text="Br" box="border-2 border-[#edb100] bg-[#2b2100] text-[#ffc20e]" /> },
  {
    name: 'Media Player Classic',
    line: 'bg-[#fff200]',
    bg: 'bg-linear-to-r from-[#45403a] from-80% to-[#77701f] to-80%',
    art: (
      <span className="flex flex-col items-center">
        <svg width="42" height="22" viewBox="0 0 42 22">
          <path d="M1 11L38 0v5L2 17z" fill="white" />
          <path d="M6 9l5 5M15 6l5 5M24 3l5 5M33 1l4 4" stroke="black" strokeWidth="4" />
          <path d="M2 16h38v6H2z" fill="white" />
          <path d="M7 16l4 6M17 16l4 6M27 16l4 6M36 16l4 6" stroke="black" strokeWidth="5" />
        </svg>
        <span className="h-6 w-10 bg-white text-center text-[20px] leading-6 font-bold text-[#2a7fd4]">
          <span className="text-[#e05a1a]">3</span>2<span className="text-[#3aa33a]">1</span>
        </span>
      </span>
    ),
  },
  {
    name: 'Photos',
    line: 'bg-[#ff80b4]',
    art: (
      <svg width="42" height="42" viewBox="0 0 42 42">
        <path d="M0 0h42v42H0z" fill="white" />
        <path d="M3 3h36v26L30 15l-4 6L15 10 3 24z" fill="#14100b" />
        <path d="M26 20l8 14" stroke="#14100b" strokeWidth="1.5" />
      </svg>
    ),
  },
];

const LAVS = ['bg-[#a82a18]', 'bg-[#2a48d8]', 'bg-[#b02a18]', 'bg-[#2a4ae0]'];

function Tray({ label, children }: { label: string; children: ReactNode }) {
  return <button aria-label={label} className="flex h-20 w-12 items-center justify-center">{children}</button>;
}

function Lav({ box }: { box: string }) {
  return <span className={`h-8 w-[31px] text-center text-[14px] leading-8 font-bold ${box}`}>LAV</span>;
}

const line = { fill: 'none', stroke: 'white', strokeWidth: 2 } as const;

function Taskbar() {
  return (
    <footer className="flex h-20 shrink-0 items-stretch bg-linear-to-r from-[#1b150c] via-[#25211a] to-[#1e1a18] text-white">
      {[
        <svg key="w" width="34" height="34" viewBox="0 0 34 34" fill="white"><path d="M0 5l14-2v13H0zM16 3l18-3v16H16zM0 18h14v13L0 29zM16 18h18v16l-18-3z" /></svg>,
        <svg key="s" width="32" height="34" viewBox="0 0 32 34" {...line}><circle cx="20" cy="12" r="11" /><path d="M12 20L0 33" /></svg>,
        <svg key="t" width="40" height="30" viewBox="0 0 40 30" {...line}><path d="M9 1h22v28H9zM6 5H1v19h5M34 5h5v19h-5" /></svg>,
      ].map((icon, i) => (
        <button key={i} aria-label={['התחל', 'חיפוש', 'תצוגת משימות'][i]} className="flex w-24 items-center justify-center">{icon}</button>
      ))}
      <div className="mr-2 flex">
        {APPS.map((a) => (
          <button key={a.name} aria-label={a.name} dir="ltr" className="flex w-[93px] justify-center">
            <span className={`relative flex h-20 w-[75px] items-center justify-center ${a.bg ?? ''}`}>
              {a.art}
              {a.line && <span className={`absolute inset-x-0 bottom-0 h-1 ${a.line}`} />}
            </span>
          </button>
        ))}
        <button aria-label="NVIDIA" className="relative flex w-[93px] items-center justify-center bg-[#514d47]">
          <NvidiaIcon className="h-[46px] w-[46px]" />
          <span className="absolute inset-x-0 bottom-0 h-1 bg-[#ff80b4]" />
        </button>
      </div>

      <div className="mr-auto flex" dir="ltr">
        <span className="ml-[9px] w-px bg-[#6b665f]" />
        <button aria-label="התראות" className="ml-3 flex w-[86px] items-center justify-center">
          <svg width="34" height="34" viewBox="0 0 34 34" {...line}><path d="M1 2h32v24H22l-5 6-5-6H1z" /></svg>
        </button>
        <button className="w-36 text-center text-[23px] leading-9">23:14<br />19/03/2018</button>
        <button className="w-[76px] text-center text-[23px] leading-9">עבר<br />HE</button>
        <button aria-label="עט" className="flex w-[62px] items-center justify-center">
          <svg width="34" height="34" viewBox="0 0 34 34" {...line}><path d="M11 22L25 3l5 3-14 19-6 3zM10 28c-6 6-12 2-7-4s8-2 5 2M27 12l6 4-6 7" /></svg>
        </button>
        <Tray label="עוצמת קול"><svg width="34" height="28" viewBox="0 0 34 28" {...line}><path d="M2 10h5l8-8v24l-8-8H2zM19 10c2 2 2 6 0 8M23 6c5 4 5 12 0 16" /><path d="M28 3c6 6 6 16 0 22" stroke="#888" /></svg></Tray>
        <Tray label="רשת"><svg width="34" height="30" viewBox="0 0 34 30" {...line}><path d="M11 5h22v17H11M10 28h16M18 22v6M1 3h8v9H1zM5 12v11h6" /></svg></Tray>
        <Tray label="רמקול">
          <svg width="32" height="32" viewBox="0 0 32 32">
            <ellipse cx="17" cy="14" rx="9" ry="16" fill="#222" stroke="#bbb" strokeWidth="2" transform="rotate(-42 17 14)" />
            <path d="M6 8l14 14-8 4z" fill="#777" />
            <circle cx="12" cy="18" r="4" fill="#eee" />
            <path d="M1 30l9-11 4 12z" fill="#ddd" />
          </svg>
        </Tray>
        <Tray label="חיפוש קבצים"><svg width="32" height="32" viewBox="0 0 32 32" fill="none" stroke="#ff7a00" strokeWidth="5"><circle cx="19" cy="12" r="9" /><path d="M12 19L3 30" /></svg></Tray>
        <Tray label="USB"><svg width="26" height="34" viewBox="0 0 26 34" {...line}><path d="M4 11V1h12v10M2 11h16v10M2 11v21h10M8 5v2M12 5v2M13 28l4 4 8-9" /></svg></Tray>
        <Tray label="TeamViewer"><TeamViewer className="h-8 w-8" /></Tray>
        {LAVS.map((c, i) => (
          <Tray key={i} label="LAV Filters"><Lav box={c} /></Tray>
        ))}
        <Tray label="LAV Splitter"><Lav box="bg-[#e6e6e6] text-black" /></Tray>
        <Tray label="משתמש"><svg width="32" height="32" viewBox="0 0 32 32"><path d="M14 4l7-4 8 6-8 4z" fill="#eee" /><path d="M6 6l14-1 7 11-14 3z" fill="#2a2a2a" stroke="#777" /><path d="M2 15l8 4-4 8-5-4z" fill="#6a9a6a" stroke="#ddd" /><circle cx="22" cy="17" r="6" fill="#e9a45c" /><path d="M14 31c0-10 16-10 16 0z" fill="#4a9ae0" /></svg></Tray>
        <Tray label="מצלמת רשת"><svg width="26" height="26" viewBox="0 0 26 26"><path d="M5 20h16l3 5H2z" fill="#777" /><circle cx="13" cy="11" r="11" fill="#c9c9c9" /><circle cx="13" cy="11" r="6" fill="#4b5a58" /><circle cx="13" cy="11" r="3" fill="#2a9a90" /></svg></Tray>
        <Tray label="ESET"><span className="h-8 w-8 rounded-[10px] border-4 border-[#008a95] bg-white text-center text-[24px] leading-5 font-bold text-[#008a95]">e</span></Tray>
        <Tray label="OneNote"><svg width="30" height="32" viewBox="0 0 30 32"><path d="M0 4l16-3v26L0 24z" fill="#80397b" /><path d="M4 20V9l7 10V8" fill="none" stroke="white" strokeWidth="2" /><path d="M18 5h8v14h-8M16 8l10 16M27 10L17 24" fill="none" stroke="#e8d8e8" strokeWidth="2" /><circle cx="16" cy="28" r="3" fill="none" stroke="white" strokeWidth="2" /><circle cx="25" cy="28" r="3" fill="none" stroke="white" strokeWidth="2" /></svg></Tray>
        <button aria-label="אנשים" className="flex w-[94px] items-center justify-center">
          <svg width="30" height="32" viewBox="0 0 30 32" {...line}><circle cx="20" cy="7" r="6" /><circle cx="9" cy="17" r="5" /><path d="M1 31c0-11 15-11 15 0M15 15c6-4 13 0 13 9" /></svg>
        </button>
      </div>
    </footer>
  );
}

export default function App() {
  return (
    <div
      dir="rtl"
      className="relative flex h-screen flex-col overflow-hidden bg-[#f0f0f0] text-black"
      style={{ fontFamily: '"Open Sans", "Liberation Sans", sans-serif' }}
    >
      <TitleBar />
      <MenuBar />
      <ToolBar />
      <div className="flex min-h-0 flex-1 border-b border-[#a0a0a0]">
        <Sidebar />
        <Main />
      </div>
      <Taskbar />
      <PenToolbar />
    </div>
  );
}
